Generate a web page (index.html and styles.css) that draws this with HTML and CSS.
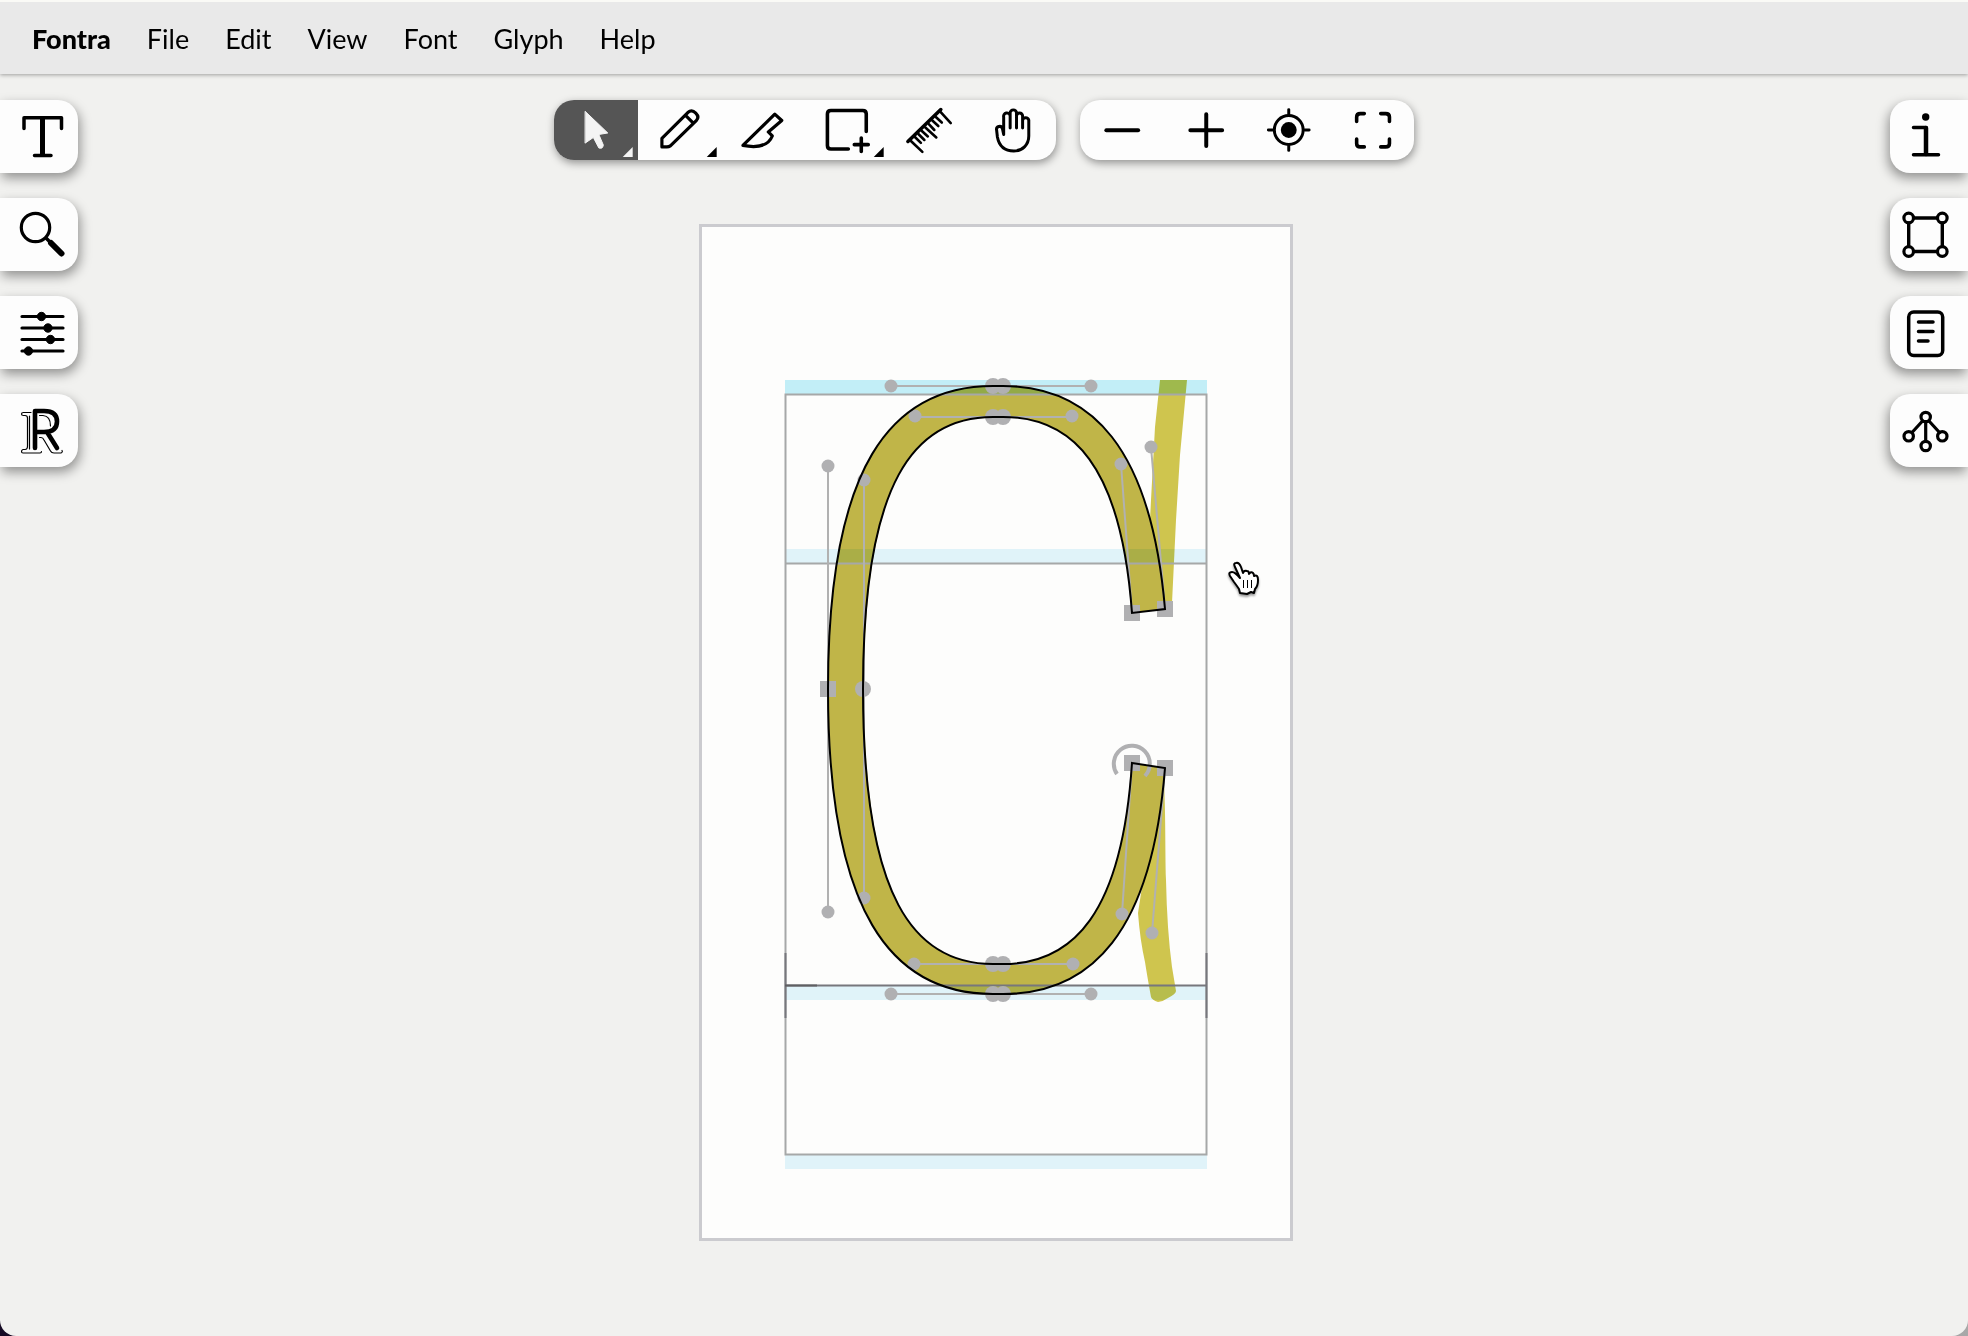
FILE: index.html
```html
<!DOCTYPE html>
<html lang="en">
<head>
<meta charset="utf-8">
<title>Fontra</title>
<link rel="stylesheet" href="styles.css">
</head>
<body>
<div class="app">
  <header class="menu-bar">
    <nav class="menu" aria-label="Main menu">
      <button class="menu-item menu-item-app" type="button">Fontra</button>
      <button class="menu-item" type="button">File</button>
      <button class="menu-item" type="button">Edit</button>
      <button class="menu-item" type="button">View</button>
      <button class="menu-item" type="button">Font</button>
      <button class="menu-item" type="button">Glyph</button>
      <button class="menu-item" type="button">Help</button>
    </nav>
  </header>

  <main class="editor">
    <svg class="glyph-canvas" viewBox="0 0 1968 1336" preserveAspectRatio="xMidYMin meet" role="img" aria-label="Glyph C">
      <rect class="glyph-cell" x="700.5" y="225.5" width="591" height="1014"/>

      <!-- background stroke -->
      <path class="brush" d="M1160 380H1187L1183 423L1180 455L1176 520L1172 603H1160L1150 520L1151 500L1155 427Z"/>
      <path class="brush" d="M1160 770H1163C1166 800 1165 850 1166 880Q1167 930 1172 967L1176 991Q1176 994 1168 998Q1164 1001 1158 1002Q1152 1000 1151 997Q1147 975 1145 962Q1140 940 1138 913Z"/>

      <path class="glyph-fill" d="M1132 763L1165 768C1152 933 1091 994 1003 994H993C891 994 828 912 828 689C828 466 891 386 993 386H1003C1091 386 1151 447 1165 609L1132 613C1121 464 1072 417 1003 417H993C915 417 864 480 864 689C864 898 914 964 993 964H1003C1073 964 1122 914 1132 763Z"/>

      <!-- alignment zones and metrics -->
      <g class="zones">
        <rect class="zone-strong" x="785" y="380" width="422" height="14"/>
        <rect x="785" y="549" width="422" height="14"/>
        <rect x="785" y="986" width="422" height="14"/>
        <rect x="785" y="1155" width="422" height="14"/>
      </g>
      <g class="metrics">
        <rect x="785.5" y="394.5" width="421" height="760"/>
        <path d="M785 563.5H1207"/>
        <path class="metrics-dark" d="M785 985.5H1207M785.5 953V1018M1206.5 953V1018"/>
        <path class="metrics-base" d="M785 985.5H817"/>
      </g>

      <!-- handles -->
      <path class="handle-lines" d="M891 386H1091M915 417H1072M828 466V912M864 480V898M914 964H1073M891 994H1091M1121 464L1132 613M1151 447L1165 609M1122 914L1132 763M1152 933L1165 768"/>
      <g class="nodes">
        <circle cx="891" cy="386" r="6.500"/><circle cx="1091" cy="386" r="6.500"/>
        <circle cx="915" cy="416" r="6.500"/><circle cx="1072" cy="416" r="6.500"/>
        <circle cx="828" cy="466" r="6.500"/><circle cx="828" cy="912" r="6.500"/>
        <circle cx="864" cy="480" r="6.500"/><circle cx="864" cy="898" r="6.500"/>
        <circle cx="914" cy="964" r="6.500"/><circle cx="1073" cy="964" r="6.500"/>
        <circle cx="891" cy="994" r="6.500"/><circle cx="1091" cy="994" r="6.500"/>
        <circle cx="1121" cy="464" r="6.500"/><circle cx="1151" cy="447" r="6.500"/>
        <circle cx="1122" cy="914" r="6.500"/><circle cx="1152" cy="933" r="6.500"/>
        <circle cx="993" cy="386" r="8"/><circle cx="1003" cy="386" r="8"/>
        <circle cx="993" cy="417" r="8"/><circle cx="1003" cy="417" r="8"/>
        <circle cx="993" cy="964" r="8"/><circle cx="1003" cy="964" r="8"/>
        <circle cx="993" cy="994" r="8"/><circle cx="1003" cy="994" r="8"/>
        <circle cx="863" cy="689" r="8"/>
        <rect x="820" y="681" width="16" height="16"/>
        <rect x="1124" y="605" width="16" height="16"/>
        <rect x="1157" y="601" width="16" height="16"/>
        <rect x="1124" y="755" width="16" height="16"/>
        <rect x="1157" y="760" width="16" height="16"/>
      </g>
      <path class="start-arc" d="M1117 774A18 18 0 1 1 1145 776"/>

      <path class="glyph-outline" d="M1132 763L1165 768C1152 933 1091 994 1003 994H993C891 994 828 912 828 689C828 466 891 386 993 386H1003C1091 386 1151 447 1165 609L1132 613C1121 464 1072 417 1003 417H993C915 417 863 480 863 689C863 898 914 964 993 964H1003C1073 964 1122 914 1132 763Z"/>

      <!-- pointing hand -->
      <path class="hand-pointer" d="M1240 593L1239 589Q1237 586 1234 582L1230 576Q1228 572 1232 572Q1235 572 1240 578L1235 567Q1233 563 1236 563Q1239 562 1241 567L1243 573Q1244 570 1247 571Q1249 571 1249 574Q1251 571 1253 573Q1254 574 1254 576Q1258 574 1258 580Q1258 586 1255 589L1254 593L1251 592L1247 594Z"/>
      <path class="hand-lines" d="M1243.500 580V588M1247.500 580V588M1251.500 580V588"/>
    </svg>

    <aside class="tabs tabs-left">
      <button class="tab" type="button" aria-label="Text entry">
        <svg viewBox="0 0 78 73"><path stroke-width="3.500" d="M24 28.500V17.800H61.500V28.500M34.500 55.500H51"/><path stroke-width="5" stroke-linecap="butt" d="M42.500 18V55"/></svg>
      </button>
      <button class="tab" type="button" aria-label="Glyph search">
        <svg viewBox="0 0 78 73"><circle cx="35.500" cy="29.500" r="14.200" stroke-width="3.200"/><path stroke-width="3.500" d="M46 40L51 45"/><path stroke-width="6" d="M51 45L61.500 55.500"/></svg>
      </button>
      <button class="tab" type="button" aria-label="Designspace navigation">
        <svg viewBox="0 0 78 73"><path stroke-width="3.200" d="M22 20.500H63M22 32H63M22 43.500H63M22 55H63"/><g class="solid"><circle cx="41.500" cy="20.500" r="4.200"/><circle cx="48" cy="32" r="4.200"/><circle cx="50.500" cy="43.500" r="4.200"/><circle cx="28.500" cy="55" r="4.200"/></g></svg>
      </button>
      <button class="tab" type="button" aria-label="Reference font">
        <svg viewBox="0 0 78 73"><path stroke-width="1.200" d="M31 18.500H23.500Q21.500 18.500 21.500 20T23.500 21.500H25Q27.500 21.500 27.500 24V52Q27.500 55.500 25 55.500H23Q21.500 56 21.500 57.500T23 59H40Q41.500 59 41.500 57.500M29.500 22V55M39.500 21.500H43Q50.500 22 50.500 32M39.500 43.500H41Q43 43.500 44 46L50.500 57Q51.500 59 54 59H61Q63 58 62 56.500"/><path stroke-width="4.600" d="M35 54V17H44Q57 17 57 27.500T44 38H35M47 38L57 54"/></svg>
      </button>
    </aside>

    <div class="toolbars">
      <div class="tool-group tool-group-edit" role="toolbar" aria-label="Edit tools">
        <button class="tool tool-active" type="button" aria-label="Pointer">
          <svg viewBox="0 0 84 60"><path class="solid" stroke-width="1" d="M31.500 11.500L54 33L45 34.500L49.500 45Q49 49.500 45 48L39.500 37.500L31.500 43Z"/><path class="solid-only" d="M79 47V57H69Z"/></svg>
        </button>
        <button class="tool" type="button" aria-label="Pen">
          <svg viewBox="0 0 84 60"><path stroke-width="3.200" d="M24 47V38.500L50 12.500Q54 9 58 13T58.500 20.500L32.500 46Q31 47 29 47ZM47.500 15L55.500 23"/><path class="solid-only" d="M79 47V57H69Z"/></svg>
        </button>
        <button class="tool" type="button" aria-label="Knife">
          <svg viewBox="0 0 84 60"><path stroke-width="3.200" d="M22 45.500L54 14L61 20.500L47.500 32L51.500 36Q46 50 22 45.500Z"/></svg>
        </button>
        <button class="tool" type="button" aria-label="Shape">
          <svg viewBox="0 0 84 60"><path stroke-width="3.600" d="M61.500 31.500V14Q61.500 10.500 58 10.500H26Q22.500 10.500 22.500 14V45.500Q22.500 49 26 49H43.500M56.500 38V51.500M49.500 44.700H63.500"/><path class="solid-only" d="M79 47V57H69Z"/></svg>
        </button>
        <button class="tool" type="button" aria-label="Power ruler">
          <svg viewBox="0 0 84 60"><path stroke-width="3.600" d="M19 41.500L52 9.500"/><path stroke-width="2.600" d="M22 41L33.500 52M26 37L32 43M29.500 34L35.500 40M33 31L39 36.500M36.500 27.500L47.500 37.500M40 24L45.500 30M43.500 20.500L49.500 26M47 17L53 22.500M51 11L62 23"/></svg>
        </button>
        <button class="tool" type="button" aria-label="Hand">
          <svg viewBox="0 0 84 60"><path stroke-width="3" d="M31.800 34.500V17A3.300 3.300 0 0 1 38.300 15.500M38.300 28V13A3.200 3.200 0 0 1 44.700 13V28M44.700 16A3 3 0 0 1 50.800 16V28M50.800 20A3.200 3.200 0 0 1 57 20V36C57 45 50.500 51 42 51C32 51 27 45 25.500 37L24.700 30A3 3 0 0 1 30.500 28.500L31.800 34.500"/></svg>
        </button>
      </div>
      <div class="tool-group tool-group-zoom" role="toolbar" aria-label="Zoom tools">
        <button class="tool" type="button" aria-label="Zoom out">
          <svg viewBox="0 0 84 60"><path stroke-width="4" d="M26.500 30.200H58.500"/></svg>
        </button>
        <button class="tool" type="button" aria-label="Zoom in">
          <svg viewBox="0 0 84 60"><path stroke-width="4" d="M26.500 30.200H58.500M42.500 14.200V46.200"/></svg>
        </button>
        <button class="tool" type="button" aria-label="Fit selection">
          <svg viewBox="0 0 84 60"><circle cx="42" cy="30" r="14.500" stroke-width="3"/><circle class="solid-only" cx="42" cy="30" r="8"/><path stroke-width="3" d="M42 9.500V14M42 46V50.500M21.500 30H26M58 30H62.500"/></svg>
        </button>
        <button class="tool" type="button" aria-label="Fullscreen">
          <svg viewBox="0 0 84 60"><path stroke-width="3.600" d="M25.800 21.500V17Q25.800 13.500 29.500 13.500H33.500M50 13.500H55Q58.800 13.500 58.800 17V21.500M58.800 39V43.500Q58.800 47 55 47H50M33.500 47H29.500Q25.800 47 25.800 43.500V39"/></svg>
        </button>
      </div>
    </div>

    <aside class="tabs tabs-right">
      <button class="tab" type="button" aria-label="Selection info">
        <svg viewBox="0 0 78 73"><circle class="solid-only" cx="35.700" cy="17" r="3.700"/><path stroke-width="3.500" d="M23.500 27.500H36M23.500 54.800H48.500"/><path stroke-width="4.500" d="M36 28V54"/></svg>
      </button>
      <button class="tab" type="button" aria-label="Selection transformation">
        <svg viewBox="0 0 78 73"><path stroke-width="3.400" d="M24 20H47M24 53.500H47M18.700 25V48M52.300 25V48"/><g stroke-width="3.200"><circle cx="18.700" cy="20" r="4.800"/><circle cx="52.300" cy="20" r="4.800"/><circle cx="18.700" cy="53.500" r="4.800"/><circle cx="52.300" cy="53.500" r="4.800"/></g></svg>
      </button>
      <button class="tab" type="button" aria-label="Glyph notes">
        <svg viewBox="0 0 78 73"><rect x="18.700" y="16" width="34" height="43.500" rx="5" stroke-width="3.500"/><path stroke-width="3.500" d="M28.500 26H43M28.500 35.500H43M28.500 45H38"/></svg>
      </button>
      <button class="tab" type="button" aria-label="Related glyphs">
        <svg viewBox="0 0 78 73"><path stroke-width="3.200" d="M32.500 27L22 38.500M39 27L49.500 38.500M35.700 28V47"/><g stroke-width="3.200"><circle cx="35.700" cy="23" r="4.700"/><circle cx="18.700" cy="42.300" r="4.700"/><circle cx="52.300" cy="42.300" r="4.700"/><circle cx="35.700" cy="52" r="4.700"/></g></svg>
      </button>
    </aside>
  </main>
</div>
</body>
</html>
```
FILE: styles.css
```css
* {
  box-sizing: border-box;
}

body {
  margin: 0;
  background: linear-gradient(90deg, #160a24, #a8a8a8);
  font-family: Lato, "Open Sans", sans-serif;
  color: #000;
}

button {
  margin: 0;
  padding: 0;
  border: 0;
  background: none;
  color: inherit;
  font: inherit;
}

.app {
  position: relative;
  display: flex;
  flex-direction: column;
  min-height: 100vh;
  overflow: hidden;
  border-radius: 0 0 16px 16px;
  background: #f1f1ef;
}

.menu-bar {
  position: relative;
  z-index: 1;
  height: 74px;
  padding: 2px 32px 0;
  border-top: 2px solid #fafaf6;
  background: #e9e9e9;
  box-shadow: 0 1px 4px rgba(0, 0, 0, 0.35);
}

.menu {
  display: flex;
  align-items: center;
  gap: 36px;
  height: 100%;
}

.menu-item {
  font-size: 27px;
  line-height: 32px;
}

.menu-item-app {
  font-weight: 900;
}

.editor {
  display: flex;
  flex: 1;
  justify-content: space-between;
  align-items: flex-start;
  padding-top: 26px;
}

/* The drawing surface lies under the menu bar, tabs and tools. */
.glyph-canvas {
  position: absolute;
  inset: 0;
  width: 100%;
  height: 100%;
}

.glyph-cell {
  fill: #fdfdfc;
  stroke: #cbcbcf;
  stroke-width: 3px;
}

.brush {
  fill: #cfc54e;
}

.glyph-fill {
  fill: #c0b548;
}

.zones {
  fill: #e2f5fc;
  mix-blend-mode: multiply;
}

.zone-strong {
  fill: #c4f0fa;
}

.metrics {
  fill: none;
  stroke: #a6a8a8;
  stroke-width: 2px;
}

.metrics-dark {
  stroke: #77777c;
}

.metrics-base {
  stroke: #5f5f62;
}

.handle-lines {
  fill: none;
  stroke: #b1b1b1;
  stroke-width: 2px;
}

.nodes {
  fill: #b0b0b2;
}

.start-arc {
  fill: none;
  stroke: #b0b0b2;
  stroke-width: 4px;
}

.glyph-outline {
  fill: none;
  stroke: #000;
  stroke-width: 2px;
}

.hand-pointer {
  fill: #fff;
  stroke: #000;
  stroke-width: 2px;
  stroke-linejoin: round;
  filter: drop-shadow(0 2px 1px rgba(0, 0, 0, 0.4));
}

.hand-lines {
  stroke: #000;
  stroke-width: 1px;
}

.tabs {
  position: relative;
  display: flex;
  flex-direction: column;
  gap: 25px;
}

.tab {
  width: 78px;
  height: 73px;
  background: #fdfdfd;
  box-shadow: 2px 5px 12px rgba(0, 0, 0, 0.4);
}

.tabs-left .tab {
  border-radius: 0 20px 20px 0;
}

.tabs-right .tab {
  border-radius: 20px 0 0 20px;
  box-shadow: -2px 5px 12px rgba(0, 0, 0, 0.4);
}

.tab svg,
.tool svg {
  display: block;
  width: 100%;
  height: 100%;
  fill: none;
  stroke: currentColor;
  stroke-linecap: round;
  stroke-linejoin: round;
}

.tab .solid,
.tool .solid {
  fill: currentColor;
}

.tab .solid-only,
.tool .solid-only {
  fill: currentColor;
  stroke: none;
}

.toolbars {
  position: relative;
  display: flex;
  gap: 24px;
}

.tool-group {
  display: flex;
  overflow: hidden;
  height: 60px;
  border-radius: 20px;
  background: #fdfdfd;
  box-shadow: 1px 3px 9px rgba(0, 0, 0, 0.4);
}

.tool-group-edit {
  width: 502px;
}

.tool-group-zoom {
  width: 334px;
}

.tool {
  flex: 1;
}

.tool-active {
  background: #555;
  color: #f4f4f4;
}
```
